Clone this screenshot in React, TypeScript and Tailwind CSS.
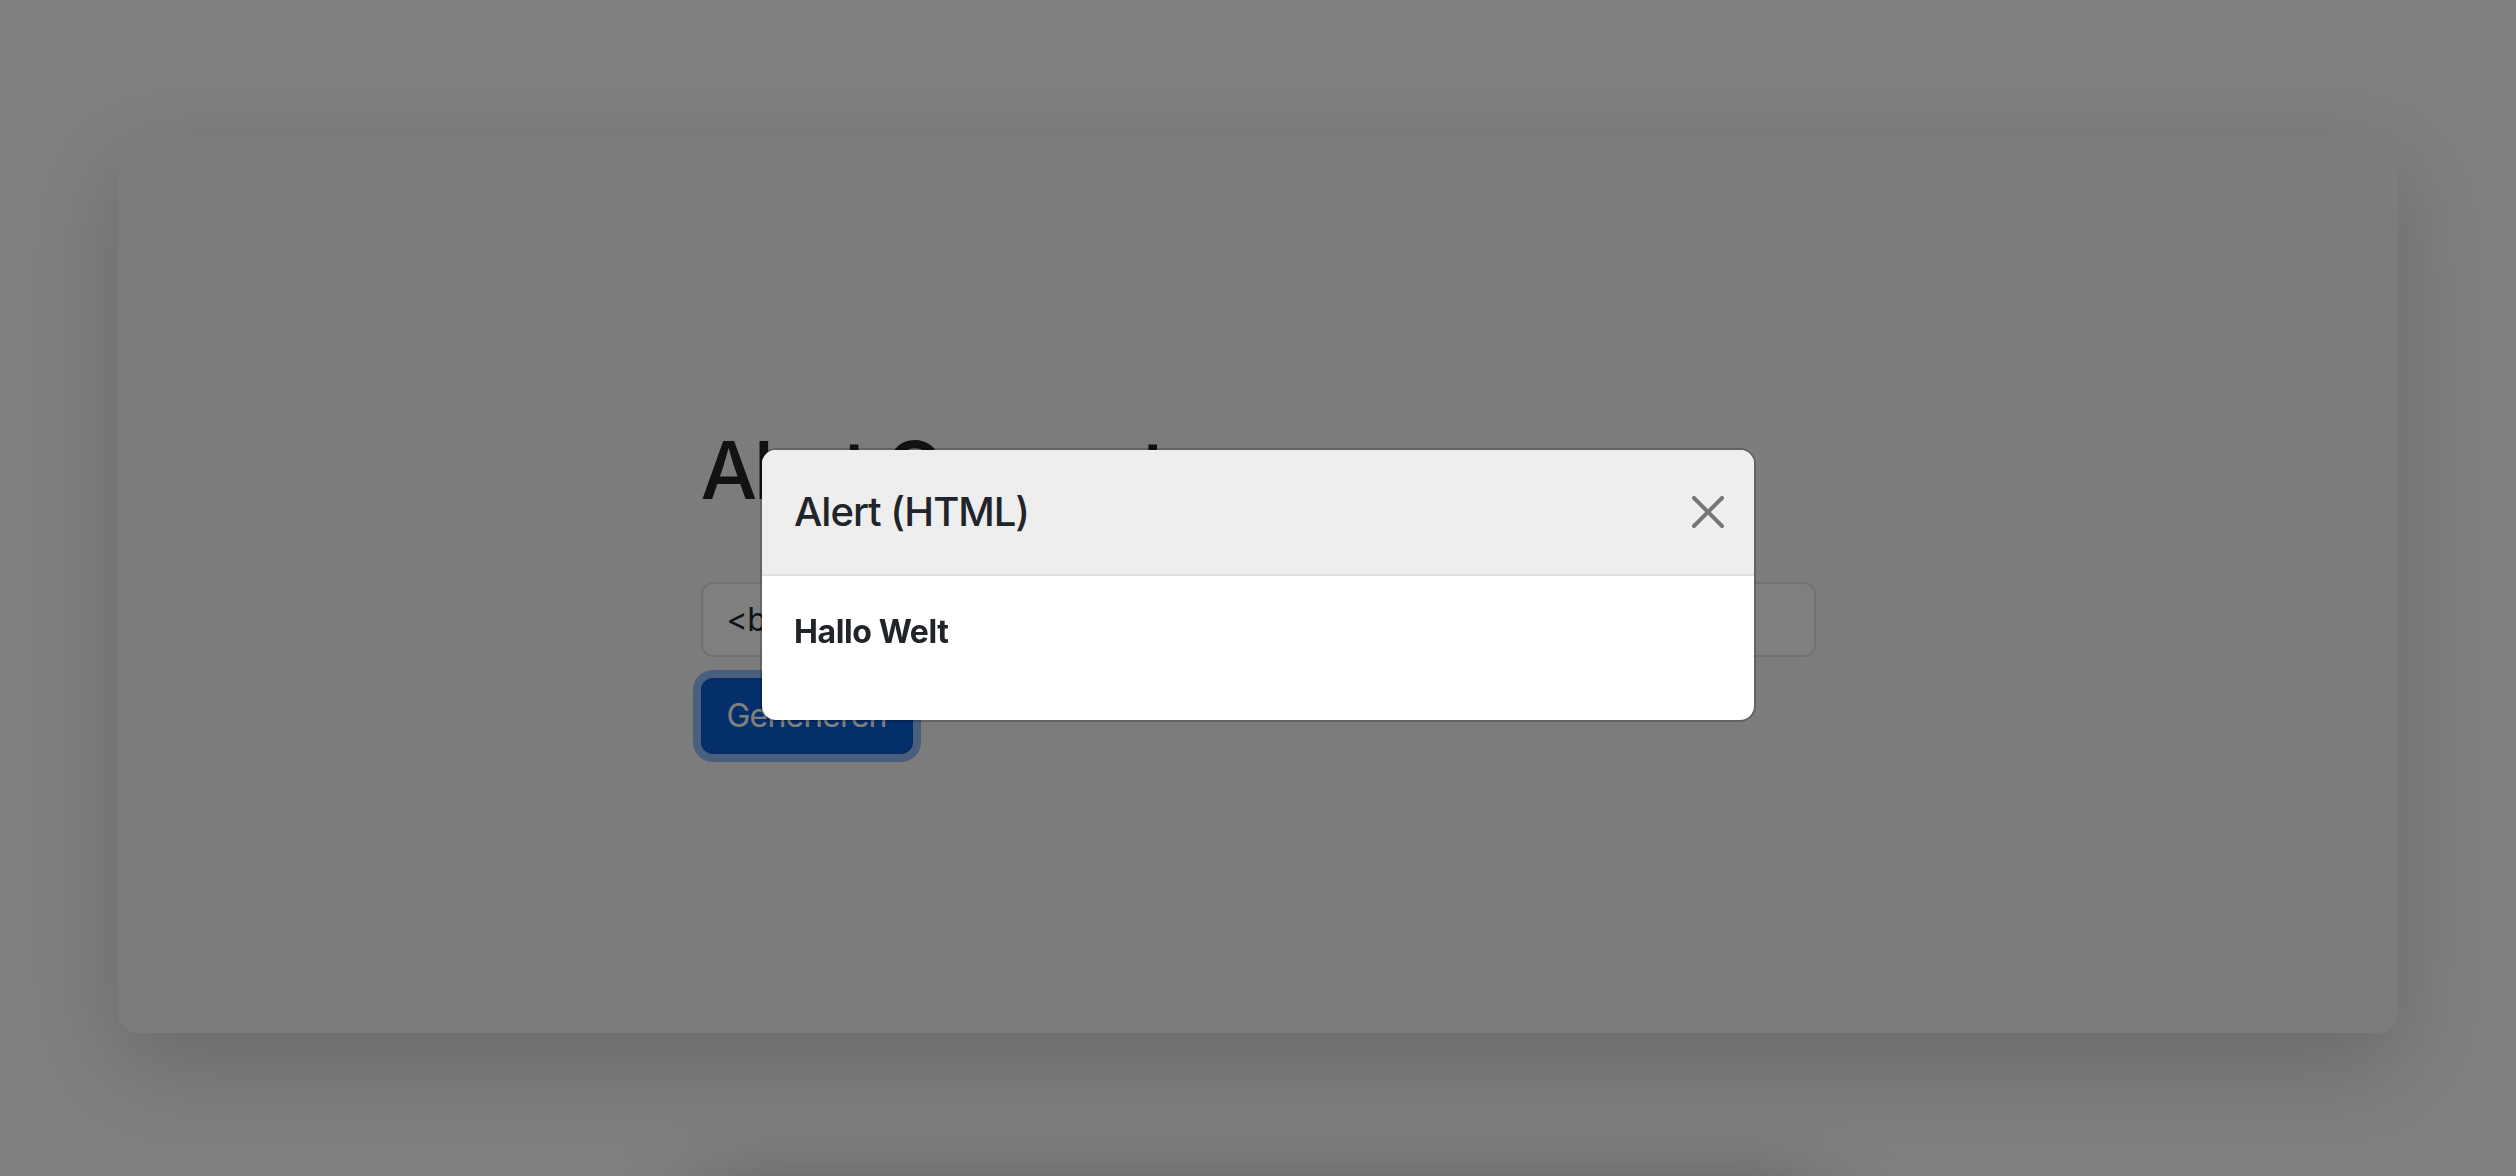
import React from 'react';

const CloseIcon = () => (
  <svg viewBox="0 0 16 16" className="w-[32px] h-[32px]" fill="#000" fillOpacity={0.5}>
    <path d="M.293.293a1 1 0 0 1 1.414 0L8 6.586 14.293.293a1 1 0 1 1 1.414 1.414L9.414 8l6.293 6.293a1 1 0 0 1-1.414 1.414L8 9.414l-6.293 6.293a1 1 0 0 1-1.414-1.414L6.586 8 .293 1.707a1 1 0 0 1 0-1.414" />
  </svg>
);

export default function App() {
  return (
    <div className="relative min-h-screen bg-white font-['Inter','Noto_Sans',sans-serif] text-[#212529]">
      <div className="pt-[136px] pb-[200px]">
        <div className="mx-auto w-[2280px] h-[897px] rounded-[20px] bg-[#f8f9fa] shadow-[0_32px_96px_rgba(0,0,0,0.175)] flex justify-center pt-[286px]">
          <div className="w-[1115px] flex flex-col items-start">
            <h1 className="text-[80px] leading-[96px] font-medium tracking-[-3.5px]">Alert Generator</h1>
            <input
              readOnly
              value="<b>Hallo Welt</b>"
              className="mt-[64px] w-full h-[75px] px-[24px] text-[32px] leading-[48px] tracking-[-0.5px] bg-white border-2 border-[#dee2e6] rounded-[12px] outline-none"
            />
            <button className="mt-[21px] h-[76px] px-[24px] text-[32px] leading-[48px] tracking-[-0.8px] text-white bg-[#0b5ed7] border-2 border-[#0a58ca] rounded-[12px] shadow-[0_0_0_8px_rgba(49,132,253,0.5)]">
              Generieren
            </button>
          </div>
        </div>
        <div className="mx-auto mt-[143px] w-[1115px] h-[400px] rounded-[20px] bg-white shadow-[0_32px_96px_rgba(0,0,0,0.45)]" />
      </div>

      <div className="fixed inset-0 bg-black/50" />

      <div className="fixed inset-0 flex justify-center pt-[448px]">
        <div className="w-[996px] h-fit bg-white bg-clip-padding border-2 border-black/[0.2] rounded-[16px] overflow-hidden">
          <div className="flex items-center justify-between pl-[32px] pr-[30px] py-[32px] bg-[#eeeeee] border-b-2 border-[#dee2e6]">
            <h5 className="text-[40px] leading-[60px] font-medium tracking-[-1px]">Alert (HTML)</h5>
            <button className="flex items-center justify-center">
              <CloseIcon />
            </button>
          </div>
          <div className="p-[32px]">
            <p className="mb-[32px] text-[32px] leading-[48px] tracking-[-0.4px]">
              <b className="font-bold">Hallo Welt</b>
            </p>
          </div>
        </div>
      </div>
    </div>
  );
}
